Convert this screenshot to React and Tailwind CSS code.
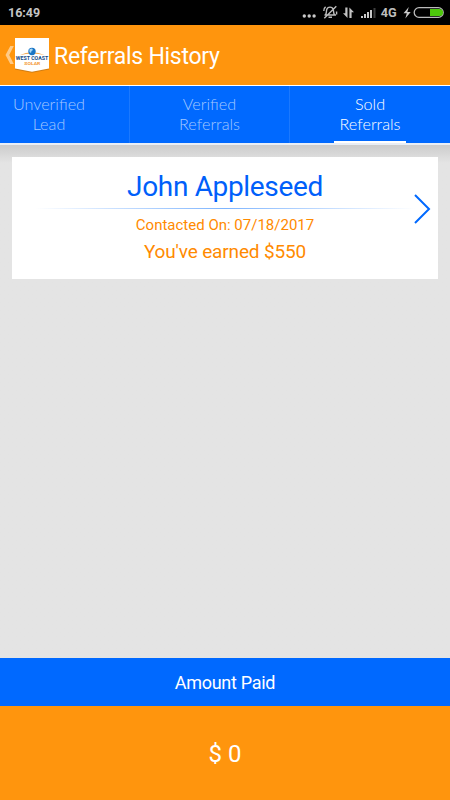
function StatusIcons() {
  return (
    <svg width="144" height="24" viewBox="302 0 144 24" fill="none" className="block">
      <g fill="#c8c8c8">
        <circle cx="304.3" cy="16" r="1.7" />
        <circle cx="309.2" cy="16" r="1.7" />
        <circle cx="314.1" cy="16" r="1.7" />
      </g>
      <g stroke="#bdbdbd" strokeWidth="1.400">
        <path d="M325.500 14.600c1.200-1.300.8-3.500 1.200-5 .9-3.300 5.700-3.300 6.600 0 .4 1.500 0 3.700 1.200 5M324.500 15h11.500M324.300 18.200l12-12M328.500 17.200h3.500M323.800 11c-.2-2 .5-3.300 1.800-4.200M336.600 11.500v3" />
      </g>
      <g fill="#c2c2c2">
        <path d="M345.300 7.500h2.200V18l-4.500-4.800h2.300zM349.400 18h2.200v-5.700h2.400l-4.600-4.800z" />
      </g>
      <g fill="#c8c8c8">
        <rect x="361" y="16" width="2" height="2" />
        <rect x="364" y="14" width="2" height="4" />
        <rect x="367" y="12" width="2" height="6" />
        <rect x="370" y="10" width="2" height="8" />
      </g>
      <rect x="373.500" y="8" width="2" height="10" fill="#3c3c3c" />
      <text x="380.800" y="17.300" textLength="16" lengthAdjust="spacingAndGlyphs" fill="#bdbdbd" className="font-['Roboto'] text-[12.500px] font-bold">4G</text>
      <path d="M408.800 7l-5.300 6.200h3.300l-1.500 5.300 5.400-6.500h-3.400z" fill="#c8c8c8" />
      <rect x="414.200" y="7.700" width="29" height="9.600" rx="4.800" stroke="#bbb" strokeWidth="1.300" />
      <path d="M430 9h9.500a3.500 3.500 0 0 1 0 7H430z" fill="#4dc80b" />
    </svg>
  );
}

function Logo() {
  return (
    <svg width="34" height="35" viewBox="15 38 34 35" className="block shrink-0">
      <path d="M15 39.500h34v30l-17 3.300L15 69.500z" fill="#a96a18" opacity=".55" />
      <path d="M15 38h34v30.500L32 71.800 15 68.500z" fill="#fff" />
      <path d="M19.500 55.300q12.500-6 25.500 0q-12.500-3.600-25.500 0z" fill="#f6a94f" />
      <circle cx="32" cy="51.500" r="3.700" fill="#1975c5" />
      <path d="M29.500 49.200l2.500-.8 1 1.500-1.500 1-.5 2-1.500-1z" fill="#a9d7f4" />
      <text x="15.800" y="60.300" textLength="32.500" lengthAdjust="spacingAndGlyphs" fill="#174c86" className="font-['Roboto'] text-[4.800px] font-bold">WEST COAST</text>
      <text x="24.300" y="64.500" textLength="16" lengthAdjust="spacingAndGlyphs" fill="#f49a37" className="font-['Roboto'] text-[4.300px] font-bold">SOLAR</text>
    </svg>
  );
}

export default function App() {
  return (
    <div className="flex h-[800px] w-[450px] flex-col overflow-hidden bg-[#e4e4e4] font-['Roboto',sans-serif]">
      <div className="flex h-[25px] shrink-0 items-start justify-between bg-black pl-2 pr-1">
        <span className="pt-[5px] text-[12.5px] font-bold leading-4 text-[#c4c4c4]">16:49</span>
        <StatusIcons />
      </div>

      <header className="flex h-[60px] shrink-0 items-start bg-[#ff950d] pl-[5px] pt-[13px]">
        <svg width="10" height="35" viewBox="5 38 10 35" className="block shrink-0">
          <path d="M10.300 46h3.500L9.200 55l4.600 9h-3.500L5.500 55z" fill="#ffca86" />
        </svg>
        <Logo />
        <h1 className="ml-[5px] pt-[5px] text-[23px] leading-7 tracking-[-0.27px] text-white">Referrals History</h1>
      </header>

      <nav className="flex h-[60px] shrink-0 border-b-2 border-t border-t-white border-b-[#e9eef6] bg-[#0069ff] text-center font-['Lato',sans-serif] text-[16.2px] font-light leading-5 text-[#a3c8ff]">
        <div className="w-[130px] border-r border-[#1b79ff] pr-[31px] pt-[8px]">Unverified<br />Lead</div>
        <div className="w-[160px] border-r border-[#1b79ff] pt-[8px]">Verified<br />Referrals</div>
        <div className="flex w-[160px] flex-col items-center justify-between pt-[8px] text-white">
          <span>Sold<br />Referrals</span>
          <span className="h-[2px] w-[72px] bg-white" />
        </div>
      </nav>

      <main className="grow bg-linear-to-b from-[#cccccc] to-[#e4e4e4] to-[18px] px-3 pt-3">
        <article className="relative flex h-[122px] w-[426px] flex-col items-center bg-white text-[#ff8a00]">
          <h2 className="pt-[14px] text-[28px] leading-8 tracking-[-0.33px] text-[#005ffa]">John Appleseed</h2>
          <div className="mt-[5px] h-px w-[380px] shrink-0 bg-linear-to-r from-transparent via-[#7db4ff] to-transparent" />
          <p className="mt-[6px] text-[15px] leading-5">Contacted On: 07/18/2017</p>
          <p className="mt-[5px] text-[19px] leading-6 tracking-[-0.15px]">You've earned $550</p>
          <svg width="18" height="32" viewBox="0 0 18 32" fill="none" className="absolute right-[7px] top-[36px]">
            <path d="M2 2l14 14L2 30" stroke="#0069ff" strokeWidth="2" />
          </svg>
        </article>
      </main>

      <footer className="shrink-0 text-center text-white">
        <div className="h-[48px] bg-[#0069ff] pt-[13px] text-[18px] leading-6 tracking-[-0.3px]">Amount Paid</div>
        <div className="h-[94px] bg-[#ff950d] pt-[32px] text-[24px] leading-8">$ 0</div>
      </footer>
    </div>
  );
}
